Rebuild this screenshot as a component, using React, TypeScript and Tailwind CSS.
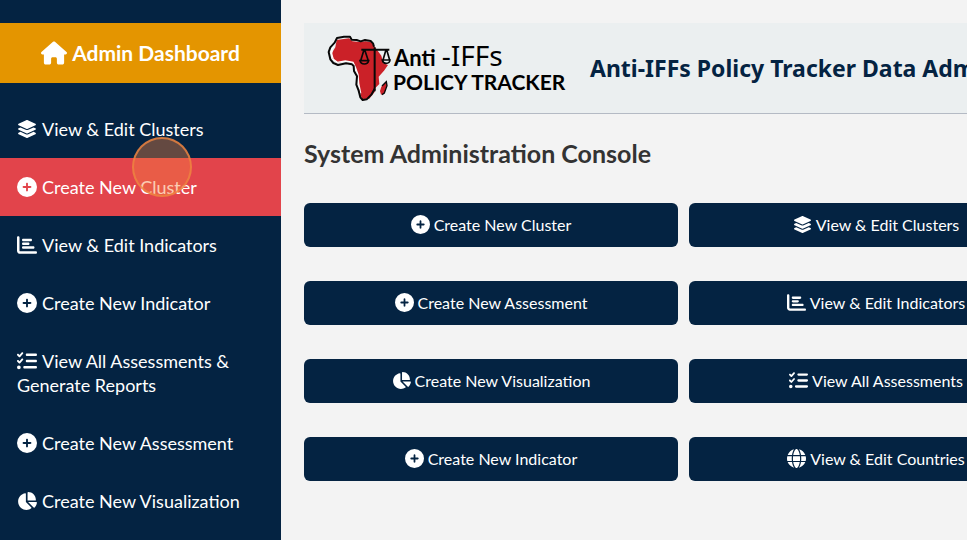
import type { IconType } from "react-icons";
import {
  FaChartBar,
  FaChartPie,
  FaCirclePlus,
  FaGlobe,
  FaHouse,
  FaLayerGroup,
  FaListCheck,
} from "react-icons/fa6";

type Entry = { icon: IconType; label: string; active?: boolean };

const navigation: Entry[] = [
  { icon: FaLayerGroup, label: "View & Edit Clusters" },
  { icon: FaCirclePlus, label: "Create New Cluster", active: true },
  { icon: FaChartBar, label: "View & Edit Indicators" },
  { icon: FaCirclePlus, label: "Create New Indicator" },
  { icon: FaListCheck, label: "View All Assessments & Generate Reports" },
  { icon: FaCirclePlus, label: "Create New Assessment" },
  { icon: FaChartPie, label: "Create New Visualization" },
];

const actions: Entry[] = [
  { icon: FaCirclePlus, label: "Create New Cluster" },
  { icon: FaLayerGroup, label: "View & Edit Clusters" },
  { icon: FaCirclePlus, label: "Create New Assessment" },
  { icon: FaChartBar, label: "View & Edit Indicators" },
  { icon: FaChartPie, label: "Create New Visualization" },
  { icon: FaListCheck, label: "View All Assessments" },
  { icon: FaCirclePlus, label: "Create New Indicator" },
  { icon: FaGlobe, label: "View & Edit Countries" },
];

function AfricaMark() {
  return (
    <svg viewBox="19 7 192 210" className="h-[70px] w-16 shrink-0" fill="none" aria-hidden="true">
      <path
        d="M48 28 L85 23 L95 32 L118 34 L135 32 L152 35 L163 50 L182 75 L188 98 L202 103 L190 120 L174 138 L176 160 L164 172 L162 184 L146 204 L124 205 L116 180 L114 155 L110 130 L104 110 L98 96 L76 92 L50 96 L36 84 L34 66 L44 50 Z"
        fill="#cb2128"
      />
      <path
        d="M44 34 L34 55 L33 70 L38 86 L50 95 L74 91 L97 95 L104 110 L112 132 L114 158 L120 188"
        stroke="#fff"
        strokeWidth="4"
      />
      <path
        d="M160 48 L157 38 L150 31 L133 28 L120 32 L108 28 L93 27 L88 18 L70 18 L49 22 L42 36 L29 50 L24 64 L29 86 L38 97 L52 103 L76 98 L94 101 L99 106 L100 121 L109 137 L107 162 L114 180 L119 200 L126 208 L138 206 L152 192 L162 174"
        stroke="#080808"
        strokeWidth="6"
        strokeLinejoin="round"
      />
      <path d="M162 50 V182 M122 57 H206" stroke="#080808" strokeWidth="6" />
      <path
        d="M130 57 L120 90 M132 57 L143 90 M118 90 H144 Q142 100 131 100 Q120 100 118 90 Z M196 57 L187 88 M198 57 L207 88 M185 88 H208 Q207 98 196 98 Q187 98 185 88 Z"
        stroke="#080808"
        strokeWidth="5"
      />
      <path d="M197 152 L199 163 L191 188 L181 192 L178 181 L182 168 Z" fill="#cb2128" />
      <path d="M184 166 L197 153 L199 165 L191 187 L184 192" stroke="#080808" strokeWidth="4" />
    </svg>
  );
}

function Logo() {
  return (
    <div className="flex w-[240px] shrink-0 items-center gap-[2px] text-black">
      <AfricaMark />
      <div className="whitespace-nowrap font-['Lato',sans-serif]">
        <div className="flex items-baseline gap-[6px] pl-px leading-6">
          <span className="text-[22px] font-bold">Anti</span>
          <span className="font-['Noto_Sans',sans-serif] text-[28px] leading-6">-IFFs</span>
        </div>
        <div className="text-[21px] font-bold leading-6">POLICY TRACKER</div>
      </div>
    </div>
  );
}

export default function App() {
  return (
    <div className="flex min-h-screen overflow-hidden bg-[#f3f3f3] font-['Lato',sans-serif]">
      <aside className="relative w-[281px] shrink-0 bg-[#042342] pt-[23px] text-white">
        <a
          href="#dashboard"
          className="flex items-center justify-center gap-[5px] bg-[#e49500] py-[18px] text-[21px] font-bold leading-6"
        >
          <FaHouse className="h-6 w-[26px]" />
          Admin Dashboard
        </a>
        <nav className="pt-[17px]">
          {navigation.map(({ icon: Icon, label, active }) => (
            <a
              key={label}
              href="#section"
              className={`block px-[17px] py-[17px] text-[18px] leading-6 ${active ? "bg-[#e2444b]" : ""}`}
            >
              <Icon className="mr-[5px] inline h-5 w-auto align-[-3px]" />
              {label}
            </a>
          ))}
        </nav>
        <span className="pointer-events-none absolute left-[132px] top-[137px] size-[60px] rounded-full border-2 border-[#ee8440]/80 bg-[#f58142]/40" />
      </aside>

      <main className="min-w-[805px] flex-1 px-[23px] pt-[23px]">
        <header className="flex h-[91px] items-center gap-[23px] overflow-hidden border-b border-[#b4bac4] bg-[#ebeff0] pl-[23px]">
          <Logo />
          <div className="whitespace-nowrap font-['Noto_Sans',sans-serif] text-[23px] font-bold text-[#042342]">
            Anti-IFFs Policy Tracker Data Admin
          </div>
        </header>
        <h1 className="pb-[34px] pt-[23px] text-[25px] font-bold leading-8 text-[#333]">
          System Administration Console
        </h1>
        <div className="grid grid-cols-2 gap-x-[11px] gap-y-[34px]">
          {actions.map(({ icon: Icon, label }) => (
            <button
              key={label}
              type="button"
              className="rounded-md bg-[#042342] py-[10px] text-[16px] leading-6 text-white"
            >
              <Icon className="mr-1 inline h-[19px] w-auto align-[-3px]" />
              {label}
            </button>
          ))}
        </div>
      </main>
    </div>
  );
}
